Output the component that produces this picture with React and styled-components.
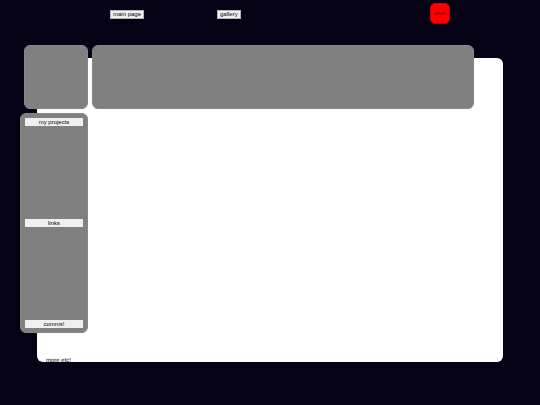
import React from "react";
import styled, { createGlobalStyle } from "styled-components";

const GlobalStyle = createGlobalStyle`
  * { box-sizing: border-box; }
  body {
    margin: 0;
    background: #040214;
    color: #000;
    font: 6px/7px "Liberation Sans", Arial, sans-serif;
    text-rendering: geometricPrecision;
  }
`;

const Page = styled.div`
  display: flex;
  flex-direction: column;
  min-height: 100vh;
`;

const TopBar = styled.header`
  display: flex;
  align-items: flex-start;
  justify-content: space-between;
  height: 45px;
  padding: 3px 90px 0 110px;
`;

const Nav = styled.nav`
  display: flex;
  gap: 73px;
  padding-top: 7px;
`;

const Button = styled.button`
  display: block;
  width: ${(p) => (p.$wide ? "100%" : "auto")};
  height: ${(p) => (p.$wide ? 8 : 9)}px;
  padding: 0 ${(p) => (p.$wide ? 0 : 2)}px;
  border: ${(p) => (p.$wide ? "0" : "1px solid #b4b4b8")};
  background: #efefef;
  color: #000;
  font: inherit;
  text-align: center;
  white-space: nowrap;
`;

const IconButton = styled.button`
  width: 20px;
  height: 21px;
  padding: 0;
  border: 1px solid #c00008;
  border-radius: 5px;
  background: #f00;
  color: #700000;
  font: inherit;
`;

const Stage = styled.main`
  display: grid;
  grid-template-columns: 68px 1fr;
  grid-template-rows: 64px 220px 25px;
  row-gap: 4px;
  column-gap: 4px;
  padding: 0 37px 0 20px;
`;

const Sheet = styled.section`
  grid-area: 1 / 1 / 4 / 3;
  display: flex;
  align-items: flex-end;
  overflow: hidden;
  margin: 13px 0 0 17px;
  padding-left: 9px;
  border-radius: 6px;
  background: #fff;
`;

const Overflow = styled.p`
  height: 4px;
  margin: 0;
`;

const Card = styled.div`
  border: 1px solid #88888c;
  border-radius: 6px;
  background: #808080;
`;

const Avatar = styled(Card)`
  grid-area: 1 / 1;
  margin-left: 4px;
`;

const Banner = styled(Card)`
  grid-area: 1 / 2;
  margin-right: 29px;
`;

const Sidebar = styled(Card)`
  grid-area: 2 / 1;
  display: flex;
  flex-direction: column;
  justify-content: space-between;
  padding: 4px;
`;

export default function App() {
  return (
    <Page>
      <GlobalStyle />
      <TopBar>
        <Nav>
          <Button type="button">main page</Button>
          <Button type="button">gallery</Button>
        </Nav>
        <IconButton type="button">icon</IconButton>
      </TopBar>
      <Stage>
        <Sheet>
          <Overflow>more etc!</Overflow>
        </Sheet>
        <Avatar />
        <Banner />
        <Sidebar as="aside">
          <Button type="button" $wide>my projects</Button>
          <Button type="button" $wide>links</Button>
          <Button type="button" $wide>comms!</Button>
        </Sidebar>
      </Stage>
    </Page>
  );
}
